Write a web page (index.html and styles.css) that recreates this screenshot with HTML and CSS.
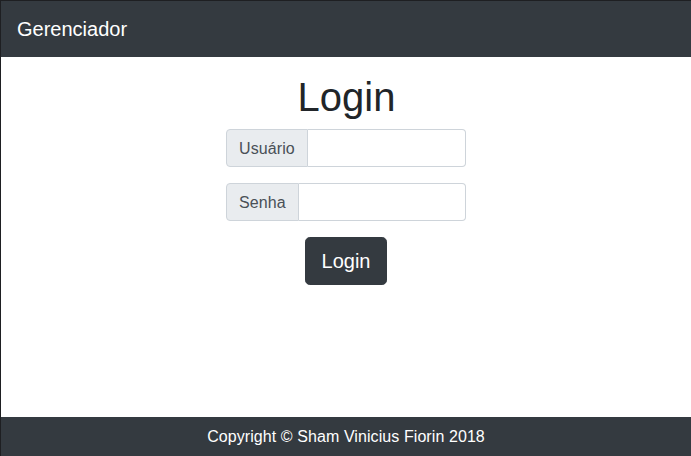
FILE: index.html
```html
<!DOCTYPE html>
<html lang="pt-BR">
<head>
<meta charset="utf-8">
<title>Gerenciador</title>
<link rel="stylesheet" href="styles.css">
</head>
<body>
<div class="page">
  <nav class="navbar">
    <span class="brand">Gerenciador</span>
  </nav>
  <main class="main">
    <h1 class="title">Login</h1>
    <form class="form">
      <div class="input-group">
        <span class="addon">Usuário</span>
        <input class="control" type="text">
      </div>
      <div class="input-group">
        <span class="addon">Senha</span>
        <input class="control" type="password">
      </div>
      <button class="btn" type="button">Login</button>
    </form>
  </main>
  <footer class="footer">Copyright © Sham Vinicius Fiorin 2018</footer>
</div>
</body>
</html>
```
FILE: styles.css
```css
* { box-sizing: border-box; }
html, body { margin: 0; padding: 0; height: 100%; }
body {
  font-family: "Liberation Sans", Arial, sans-serif;
  font-size: 16px;
  line-height: 1.5;
  color: #212529;
  background: #fff;
}
.page {
  height: 456px;
  display: flex;
  flex-direction: column;
  border-top: 1px solid #1e1f22;
  border-left: 1px solid #1e1f22;
  overflow: hidden;
}
.navbar {
  height: 56px;
  flex: none;
  background: #343a40;
  padding: 8px 16px;
  display: flex;
  align-items: center;
}
.brand {
  color: #fff;
  font-size: 20px;
  line-height: 30px;
  padding: 5px 0;
}
.main {
  flex: 1;
  display: flex;
  flex-direction: column;
  align-items: center;
  padding-top: 16px;
}
.title {
  margin: 0 0 8px;
  padding-left: 1px;
  font-size: 40px;
  font-weight: 500;
  line-height: 1.2;
  color: #212529;
}
.form {
  display: flex;
  flex-direction: column;
  align-items: center;
}
.input-group {
  display: flex;
  width: 240px;
  height: 38px;
  margin-bottom: 16px;
}
.addon {
  display: flex;
  align-items: center;
  padding: 7px 12px 5px;
  background: #e9ecef;
  border: 1px solid #ced4da;
  border-radius: 4px 0 0 4px;
  color: #495057;
  font-size: 16px;
  letter-spacing: 0.1px;
  white-space: nowrap;
}
.control {
  flex: 1;
  min-width: 0;
  border: 1px solid #ced4da;
  border-left: none;
  border-radius: 0 4px 4px 0;
  padding: 6px 12px;
  font: inherit;
  background: #fff;
}
.btn {
  font-family: inherit;
  font-size: 20px;
  line-height: 30px;
  padding: 8px 16px;
  color: #fff;
  background: #343a40;
  border: 1px solid #343a40;
  border-radius: 4.8px;
}
.footer {
  flex: none;
  height: 39px;
  padding-top: 1px;
  background: #343a40;
  color: #fff;
  display: flex;
  align-items: center;
  justify-content: center;
  font-size: 16px;
  letter-spacing: 0.08px;
}
```
